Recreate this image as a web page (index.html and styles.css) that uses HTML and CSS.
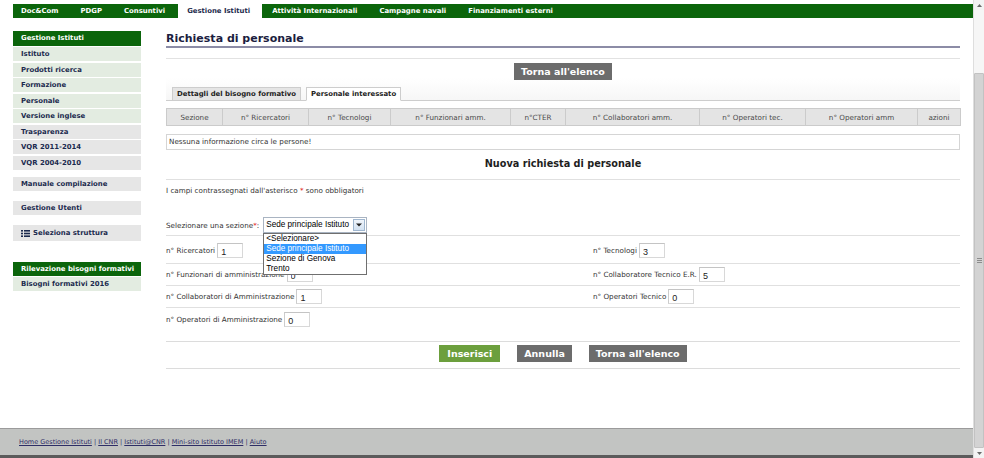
FILE: index.html
```html
<!DOCTYPE html>
<html lang="it">
<head>
<meta charset="utf-8">
<title>Richiesta di personale</title>
<link rel="stylesheet" href="styles.css">
</head>
<body>
<div class="window">
  <div class="viewport">
    <nav class="topnav">
      <a>Doc&amp;Com</a>
      <a>PDGP</a>
      <a>Consuntivi</a>
      <a class="active">Gestione Istituti</a>
      <a>Attività Internazionali</a>
      <a>Campagne navali</a>
      <a>Finanziamenti esterni</a>
    </nav>
    <div class="layout">
      <aside class="sidebar">
        <div class="menu-head">Gestione Istituti</div>
        <a class="menu-item first">Istituto</a>
        <a class="menu-item">Prodotti ricerca</a>
        <a class="menu-item">Formazione</a>
        <a class="menu-item">Personale</a>
        <a class="menu-item">Versione inglese</a>
        <a class="menu-item grey">Trasparenza</a>
        <a class="menu-item grey">VQR 2011-2014</a>
        <a class="menu-item grey">VQR 2004-2010</a>
        <a class="menu-item grey manual">Manuale compilazione</a>
        <a class="menu-item grey block">Gestione Utenti</a>
        <a class="menu-item grey block tall"><svg class="list-icon" width="9" height="7" viewBox="0 0 9 7"><rect x="0" y="0" width="2" height="1.6" fill="#1b2a4e"/><rect x="3" y="0" width="6" height="1.6" fill="#1b2a4e"/><rect x="0" y="2.7" width="2" height="1.6" fill="#1b2a4e"/><rect x="3" y="2.7" width="6" height="1.6" fill="#1b2a4e"/><rect x="0" y="5.4" width="2" height="1.6" fill="#1b2a4e"/><rect x="3" y="5.4" width="6" height="1.6" fill="#1b2a4e"/></svg>Seleziona struttura</a>
        <div class="menu-head rilevazione">Rilevazione bisogni formativi</div>
        <a class="menu-item first">Bisogni formativi 2016</a>
      </aside>
      <main class="main">
        <h1 class="page-title">Richiesta di personale</h1>
        <div class="toolbar">
          <div class="toolbar-actions"><span class="btn">Torna all'elenco</span></div>
          <div class="tabs">
            <span class="tab-item">Dettagli del bisogno formativo</span>
            <span class="tab-item active">Personale interessato</span>
          </div>
        </div>
        <table class="people">
          <colgroup>
            <col class="w-sez"><col class="w-ric"><col class="w-tec"><col class="w-fun"><col class="w-cter"><col class="w-col"><col class="w-optec"><col class="w-opamm"><col class="w-az">
          </colgroup>
          <thead>
            <tr>
              <th>Sezione</th><th>n° Ricercatori</th><th>n° Tecnologi</th><th>n° Funzionari amm.</th><th>n°CTER</th><th>n° Collaboratori amm.</th><th>n° Operatori tec.</th><th>n° Operatori amm</th><th>azioni</th>
            </tr>
          </thead>
        </table>
        <div class="empty">Nessuna informazione circa le persone!</div>
        <h2 class="section-title">Nuova richiesta di personale</h2>
        <div class="form">
          <p class="required-note">I campi contrassegnati dall'asterisco <span class="req">*</span> sono obbligatori</p>
          <div class="select-row">
            <span class="select-label">Selezionare una sezione<span class="req">*</span>:</span>
            <div class="select-wrap">
              <div class="select">
                <span class="select-value">Sede principale Istituto</span>
                <span class="select-arrow"><svg width="6" height="4" viewBox="0 0 6 4"><path d="M0 0.5 H6 L3 3.5 Z" fill="#222"/></svg></span>
              </div>
              <ul class="dropdown">
                <li>&lt;Selezionare&gt;</li>
                <li class="sel">Sede principale Istituto</li>
                <li>Sezione di Genova</li>
                <li>Trento</li>
              </ul>
            </div>
          </div>
          <div class="field-row r1">
            <div class="field"><label>n° Ricercatori</label><input type="text" value="1"></div>
            <div class="field"><label>n° Tecnologi</label><input type="text" value="3"></div>
          </div>
          <div class="field-row r2">
            <div class="field"><label>n° Funzionari di amministrazione</label><input type="text" value="0"></div>
            <div class="field"><label>n° Collaboratore Tecnico E.R.</label><input type="text" value="5"></div>
          </div>
          <div class="field-row r3">
            <div class="field"><label>n° Collaboratori di Amministrazione</label><input type="text" value="1"></div>
            <div class="field"><label>n° Operatori Tecnico</label><input type="text" value="0"></div>
          </div>
          <div class="field-row r4">
            <div class="field"><label>n° Operatori di Amministrazione</label><input type="text" value="0"></div>
          </div>
          <div class="actions">
            <span class="btn green">Inserisci</span>
            <span class="btn">Annulla</span>
            <span class="btn">Torna all'elenco</span>
          </div>
        </div>
      </main>
    </div>
    <footer class="footer">
      <a>Home Gestione Istituti</a> | <a>Il CNR</a> | <a>Istituti@CNR</a> | <a>Mini-sito Istituto IMEM</a> | <a>Aiuto</a>
    </footer>
  </div>
  <div class="scrollbar">
    <div class="sb-btn"><svg width="5" height="3" viewBox="0 0 5 3"><path d="M0 3 L2.5 0 L5 3 Z" fill="#6a6a6a"/></svg></div>
    <div class="sb-track"></div>
    <div class="sb-thumb"><span class="grip"></span></div>
    <div class="sb-btn"><svg width="5" height="3" viewBox="0 0 5 3"><path d="M0 0 L2.5 3 L5 0 Z" fill="#6a6a6a"/></svg></div>
  </div>
</div>
</body>
</html>
```
FILE: styles.css
```css
* { box-sizing: border-box; }
html, body { margin: 0; padding: 0; }
body {
  width: 984px;
  height: 458px;
  overflow: hidden;
  background: #fff;
  font-family: "DejaVu Sans", Verdana, sans-serif;
  font-size: 7.2px;
  color: #333;
}
.window { display: flex; height: 458px; }
.viewport { flex: 1; display: flex; flex-direction: column; min-width: 0; }

/* top navigation */
.topnav {
  display: flex;
  gap: 22px;
  width: 960px;
  height: 14px;
  margin: 4px 0 0 13px;
  padding-left: 8px;
  background: #0b650b;
}
.topnav a {
  color: #fff;
  font-weight: bold;
  font-size: 6.9px;
  line-height: 14px;
  white-space: nowrap;
}
.topnav a.active {
  background: #fff;
  color: #1d2a4c;
  padding: 0 12px 0 9px;
  margin: 0 -12px 0 -9px;
}

/* layout */
.layout { display: flex; gap: 25px; margin-left: 13px; padding-top: 13px; }
.sidebar { width: 128px; flex: none; }
.main { width: 794px; flex: none; padding-top: 1px; }

/* sidebar */
.menu-head {
  height: 15px;
  line-height: 15px;
  padding-left: 8px;
  background: #0b650b;
  color: #fff;
  font-weight: bold;
  font-size: 6.9px;
  white-space: nowrap;
}
.menu-head.rilevazione { margin-top: 21px; height: 14px; line-height: 14px; }
.menu-item {
  display: flex;
  align-items: center;
  height: 14px;
  margin-top: 1.5px;
  padding-left: 8px;
  background: #e3ece1;
  color: #1b2a4e;
  font-weight: bold;
  font-size: 6.9px;
  white-space: nowrap;
}
.menu-item.first { margin-top: 1px; }
.menu-item.grey { background: #e6e6e6; }
.menu-item.manual { margin-top: 7.5px; }
.menu-item.block { margin-top: 10px; }
.menu-item.tall { height: 16px; }
.list-icon { margin-right: 3px; }

/* main */
.page-title {
  margin: 0;
  font-size: 11px;
  line-height: 14px;
  font-weight: bold;
  color: #1b1d40;
  border-bottom: 2px solid #8c8ca6;
}
.toolbar {
  margin-top: 10px;
  padding-top: 4px;
  border-top: 1px solid #e2e2e2;
  background: linear-gradient(to bottom, #fff 45%, #f6f6f6);
}
.toolbar-actions { display: flex; justify-content: center; }
.btn {
  display: inline-block;
  height: 17px;
  line-height: 17px;
  padding: 0 7px;
  background: #6c6c6c;
  color: #fff;
  font-weight: bold;
  font-size: 9.5px;
  white-space: nowrap;
}
.btn.green { background: #6c9f3d; padding: 0 8px; }
.tabs {
  display: flex;
  gap: 5px;
  margin-top: 7px;
  padding-left: 6px;
  border-bottom: 1px solid #cdcdcd;
}
.tab-item {
  height: 14px;
  line-height: 12px;
  margin-bottom: -1px;
  padding: 0 4px;
  border: 1px solid #cdcdcd;
  background: #e5e5e5;
  color: #222;
  font-weight: bold;
  font-size: 6.9px;
  white-space: nowrap;
}
.tab-item.active { background: #fff; border-bottom-color: #fff; }

.people { width: 100%; margin-top: 7px; border-collapse: collapse; table-layout: fixed; }
.people th {
  height: 17px;
  padding: 0;
  background: #e4e4e4;
  border: 1px solid #cbcbcb;
  font-weight: normal;
  font-size: 7.2px;
  color: #4a4a4a;
  text-align: center;
  white-space: nowrap;
}
.w-sez { width: 56px; }
.w-ric { width: 86px; }
.w-tec { width: 82px; }
.w-fun { width: 120px; }
.w-cter { width: 55px; }
.w-col { width: 134px; }
.w-optec { width: 106px; }
.w-opamm { width: 112px; }
.w-az { width: 43px; }

.empty {
  height: 16px;
  margin-top: 8px;
  padding-left: 2px;
  line-height: 14px;
  border: 1px solid #d5d5d5;
  color: #333;
}
.section-title {
  margin: 7px 0 0;
  text-align: center;
  font-size: 9.7px;
  line-height: 14px;
  font-weight: bold;
  color: #1e1e1e;
}
.form { margin-top: 8px; border-top: 1px solid #e0e0e0; }
.required-note { margin: 6px 0 0; line-height: 10px; }
.req { color: #e02020; }

.select-row {
  display: flex;
  align-items: center;
  padding: 21px 0 2px;
  border-bottom: 1px solid #e0e0e0;
}
.select-wrap { position: relative; margin-left: 4px; }
.select {
  display: flex;
  width: 104px;
  height: 16px;
  border: 1px solid #a9b4c2;
  background: #fff;
}
.select-value {
  flex: 1;
  padding-left: 2px;
  font: 8.2px/14px "Liberation Sans", Arial, sans-serif;
  color: #000;
  white-space: nowrap;
  overflow: hidden;
}
.select-arrow {
  width: 12px;
  margin: 1px;
  display: flex;
  align-items: center;
  justify-content: center;
  background: linear-gradient(#f0f5fb, #d2e1f1);
  border: 1px solid #9fb6cf;
}
.dropdown {
  position: absolute;
  top: 16px;
  left: 0;
  z-index: 5;
  width: 104px;
  margin: 0;
  padding: 0;
  list-style: none;
  border: 1px solid #6f6f6f;
  background: #fff;
}
.dropdown li {
  height: 10px;
  padding-left: 2px;
  font: 8.2px/10px "Liberation Sans", Arial, sans-serif;
  color: #000;
  white-space: nowrap;
}
.dropdown li.sel { background: #3399ff; color: #fff; }

.field-row {
  display: grid;
  grid-template-columns: 427px 1fr;
  border-bottom: 1px solid #e0e0e0;
}
.field-row.r1 { padding: 7px 0 5px; }
.field-row.r2 { padding: 3px 0 3px; }
.field-row.r3 { padding: 3px 0 3px; }
.field-row.r4 { padding: 4px 0 0; border-bottom: 0; }
.field { display: flex; align-items: center; }
.field label { margin-right: 2px; white-space: nowrap; }
.field input {
  width: 26px;
  height: 15px;
  padding: 2px 0 0 3px;
  border: 1px solid #d8d8d8;
  border-top-color: #c4c4c4;
  border-left-color: #cccccc;
  background: #fff;
  font: 9px "Liberation Sans", Arial, sans-serif;
  color: #222;
  outline: none;
}

.actions {
  display: flex;
  justify-content: center;
  gap: 17px;
  margin-top: 14px;
  padding: 3px 0 6px;
  border-top: 1px solid #dcdcdc;
  border-bottom: 1px solid #dcdcdc;
}

/* footer */
.footer {
  margin-top: auto;
  height: 30px;
  padding-left: 19px;
  border-top: 1px solid #9b9b9b;
  border-bottom: 3px solid #5b5b5b;
  background: #c2c4c2;
  font-size: 6.5px;
  line-height: 26px;
  color: #2e2e66;
  white-space: nowrap;
}
.footer a { text-decoration: underline; }

/* scrollbar */
.scrollbar {
  width: 11px;
  flex: none;
  display: flex;
  flex-direction: column;
  background: #f1f1f1;
  border-left: 1px solid #dedede;
}
.sb-btn {
  height: 10px;
  display: flex;
  align-items: center;
  justify-content: center;
  background: #f3f3f3;
}
.sb-track { height: 63px; background: #f6f6f6; }
.sb-thumb {
  flex: 1;
  display: flex;
  align-items: center;
  justify-content: center;
  background: #d3d3d3;
  border: 1px solid #c2c2c2;
  border-radius: 1px;
}
.grip {
  width: 5px;
  height: 5px;
  background: repeating-linear-gradient(to bottom, #8c8c8c 0 1px, transparent 1px 2px);
}
```
